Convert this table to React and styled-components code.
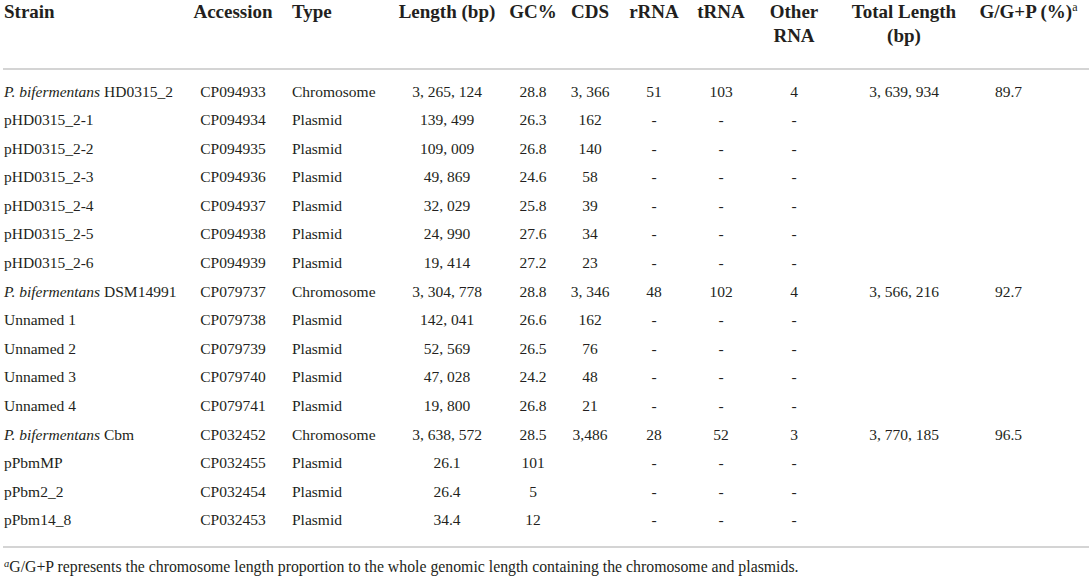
import React from 'react'
import styled, { createGlobalStyle } from 'styled-components'

const GlobalStyle = createGlobalStyle`
    html, body {
        margin: 0;
        padding: 0;
        background: #ffffff;
    }
    body {
        font-family: "Liberation Serif", "Times New Roman", serif;
        color: #231f20;
    }
`

const Page = styled.div`
    padding: 0 3px;
    width: 1086px;
`

const Table = styled.table`
    width: 1086px;
    table-layout: fixed;
    border-collapse: collapse;
    border-spacing: 0;
`

const HeadCell = styled.th`
    font-size: 19px;
    font-weight: bold;
    line-height: 24px;
    padding: 0 0 20px ${props => props.$indent || 0}px;
    text-align: ${props => props.$align || 'center'};
    vertical-align: top;
    white-space: nowrap;
    border-bottom: 2px solid #d4d4d4;
`

const Row = styled.tr`
    &:first-child td {
        padding-top: 7.5px;
    }
    &:last-child td {
        padding-bottom: 11px;
    }
`

const Cell = styled.td`
    font-size: 15.5px;
    line-height: 28.6px;
    padding: 0 ${props => props.$padRight || 0}px 0 ${props => props.$indent || 0}px;
    text-align: ${props => props.$align || 'center'};
    white-space: nowrap;
`

const Sup = styled.sup`
    font-size: 12px;
    font-weight: normal;
    line-height: 0;
    vertical-align: 7px;
`

const Note = styled.td`
    border-top: 2px solid #d4d4d4;
    padding: 9px 0 0 1px;
    font-size: 15.8px;
    line-height: 20px;
    text-align: left;
    white-space: nowrap;
`

const NoteMark = styled.sup`
    font-size: 10.5px;
    font-style: italic;
    line-height: 0;
    vertical-align: 5px;
`

const widths = [182, 96, 113, 106, 66, 48, 80, 54, 92, 128, 121]

const species = name => (
    <>
        <i>P. bifermentans</i> {name}
    </>
)

const rows = [
    [species('HD0315_2'), 'CP094933', 'Chromosome', '3, 265, 124', '28.8', '3, 366', '51', '103', '4', '3, 639, 934', '89.7'],
    ['pHD0315_2-1', 'CP094934', 'Plasmid', '139, 499', '26.3', '162', '-', '-', '-', '', ''],
    ['pHD0315_2-2', 'CP094935', 'Plasmid', '109, 009', '26.8', '140', '-', '-', '-', '', ''],
    ['pHD0315_2-3', 'CP094936', 'Plasmid', '49, 869', '24.6', '58', '-', '-', '-', '', ''],
    ['pHD0315_2-4', 'CP094937', 'Plasmid', '32, 029', '25.8', '39', '-', '-', '-', '', ''],
    ['pHD0315_2-5', 'CP094938', 'Plasmid', '24, 990', '27.6', '34', '-', '-', '-', '', ''],
    ['pHD0315_2-6', 'CP094939', 'Plasmid', '19, 414', '27.2', '23', '-', '-', '-', '', ''],
    [species('DSM14991'), 'CP079737', 'Chromosome', '3, 304, 778', '28.8', '3, 346', '48', '102', '4', '3, 566, 216', '92.7'],
    ['Unnamed 1', 'CP079738', 'Plasmid', '142, 041', '26.6', '162', '-', '-', '-', '', ''],
    ['Unnamed 2', 'CP079739', 'Plasmid', '52, 569', '26.5', '76', '-', '-', '-', '', ''],
    ['Unnamed 3', 'CP079740', 'Plasmid', '47, 028', '24.2', '48', '-', '-', '-', '', ''],
    ['Unnamed 4', 'CP079741', 'Plasmid', '19, 800', '26.8', '21', '-', '-', '-', '', ''],
    [species('Cbm'), 'CP032452', 'Chromosome', '3, 638, 572', '28.5', '3,486', '28', '52', '3', '3, 770, 185', '96.5'],
    ['pPbmMP', 'CP032455', 'Plasmid', '26.1', '101', '', '-', '-', '-', '', ''],
    ['pPbm2_2', 'CP032454', 'Plasmid', '26.4', '5', '', '-', '-', '-', '', ''],
    ['pPbm14_8', 'CP032453', 'Plasmid', '34.4', '12', '', '-', '-', '-', '', ''],
]

const App = () => {
    return (
        <Page>
            <GlobalStyle />
            <Table>
                <colgroup>
                    {widths.map((w, i) => <col key={i} style={{ width: w }} />)}
                </colgroup>
                <thead>
                    <tr>
                        <HeadCell $align="left" $indent={1}>Strain</HeadCell>
                        <HeadCell>Accession</HeadCell>
                        <HeadCell $align="left" $indent={11}>Type</HeadCell>
                        <HeadCell>Length (bp)</HeadCell>
                        <HeadCell>GC%</HeadCell>
                        <HeadCell>CDS</HeadCell>
                        <HeadCell>rRNA</HeadCell>
                        <HeadCell>tRNA</HeadCell>
                        <HeadCell>Other<br />RNA</HeadCell>
                        <HeadCell>Total Length<br />(bp)</HeadCell>
                        <HeadCell>G/G+P (%)<Sup>a</Sup></HeadCell>
                    </tr>
                </thead>
                <tbody>
                    {rows.map((r, i) => (
                        <Row key={i}>
                            <Cell $align="left" $indent={1}>{r[0]}</Cell>
                            <Cell>{r[1]}</Cell>
                            <Cell $align="left" $indent={11}>{r[2]}</Cell>
                            <Cell>{r[3]}</Cell>
                            <Cell>{r[4]}</Cell>
                            <Cell>{r[5]}</Cell>
                            <Cell>{r[6]}</Cell>
                            <Cell>{r[7]}</Cell>
                            <Cell>{r[8]}</Cell>
                            <Cell>{r[9]}</Cell>
                            <Cell $padRight={40}>{r[10]}</Cell>
                        </Row>
                    ))}
                </tbody>
                <tfoot>
                    <tr>
                        <Note colSpan={11}>
                            <NoteMark>a</NoteMark>G/G+P represents the chromosome length proportion to the whole genomic length containing the chromosome and plasmids.
                        </Note>
                    </tr>
                </tfoot>
            </Table>
        </Page>
    )
}

export default App
